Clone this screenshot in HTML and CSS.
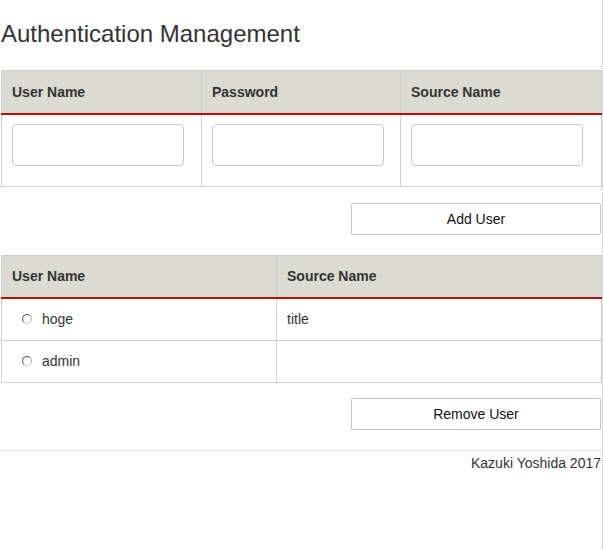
FILE: index.html
```html
<!DOCTYPE html>
<html>
<head>
<meta charset="utf-8">
<title>Authentication Management</title>
<link rel="stylesheet" href="styles.css">
</head>
<body>
<div class="page">
  <h1 class="title">Authentication Management</h1>

  <table class="grid grid-input">
    <thead>
      <tr>
        <th class="c1">User Name</th>
        <th class="c2">Password</th>
        <th class="c3">Source Name</th>
      </tr>
    </thead>
    <tbody>
      <tr>
        <td><input class="field" type="text"></td>
        <td><input class="field" type="password"></td>
        <td><input class="field" type="text"></td>
      </tr>
    </tbody>
  </table>

  <div class="actions">
    <button class="btn" type="button">Add User</button>
  </div>

  <table class="grid grid-list">
    <thead>
      <tr>
        <th class="u">User Name</th>
        <th>Source Name</th>
      </tr>
    </thead>
    <tbody>
      <tr>
        <td><label class="pick"><span class="radio"></span>hoge</label></td>
        <td>title</td>
      </tr>
      <tr>
        <td><label class="pick"><span class="radio"></span>admin</label></td>
        <td></td>
      </tr>
    </tbody>
  </table>

  <div class="actions actions-remove">
    <button class="btn" type="button">Remove User</button>
  </div>

  <footer class="footer">Kazuki Yoshida 2017</footer>
</div>
<div class="edge"></div>
</body>
</html>
```
FILE: styles.css
```css
html, body {
  margin: 0;
  padding: 0;
  background: #fff;
}
body {
  font-family: "Liberation Sans", Arial, sans-serif;
  font-size: 14px;
  color: #333;
}
.page {
  width: 601px;
  padding-left: 1px;
  padding-top: 20px;
}
.title {
  margin: 0 0 22px 0;
  font-size: 24px;
  font-weight: normal;
  line-height: 28px;
  color: #333;
}
.grid {
  width: 601px;
  border-collapse: collapse;
  table-layout: fixed;
}
.grid th {
  background: #dcdbd1;
  border: 1px solid #cfcfcf;
  border-bottom: 2px solid #b90d0d;
  text-align: left;
  font-weight: bold;
  font-size: 14px;
  color: #333;
  height: 43px;
  padding: 0 10px;
  box-sizing: border-box;
}
.grid td {
  border: 1px solid #cfcfcf;
  padding: 0 10px;
  vertical-align: middle;
}
.grid-input th.c1 { width: 200px; }
.grid-input th.c2 { width: 199px; }
.grid-input td {
  padding: 9px 10px 20px 10px;
}
.field {
  display: block;
  width: 172px;
  height: 42px;
  box-sizing: border-box;
  border: 1px solid #c8c8c8;
  border-radius: 4px;
  background: #fff;
  margin: 0;
}
.actions {
  display: flex;
  justify-content: flex-end;
  padding: 16px 1px 20px 0;
}
.actions-remove {
  padding-top: 15px;
  padding-bottom: 20px;
}
.btn {
  width: 250px;
  height: 32px;
  border: 1px solid #c6c6c6;
  border-radius: 2px;
  background: #fff;
  box-shadow: 0 0 1px rgba(0,0,0,0.15);
  font-family: "Liberation Sans", Arial, sans-serif;
  font-size: 14px;
  color: #111;
  padding: 0;
}
.grid-list th.u { width: 275px; }
.grid-list td {
  height: 42px;
  box-sizing: border-box;
}
.pick {
  display: flex;
  align-items: center;
  gap: 10px;
  padding-left: 10px;
}
.radio {
  width: 10px;
  height: 10px;
  border-radius: 50%;
  border: 1px solid #5a5a5a;
  background: radial-gradient(circle at 60% 60%, #fff 30%, #e3e3e3 100%);
  box-sizing: border-box;
  border-right-color: #b0b0b0;
  border-bottom-color: #c8c8c8;
}
.footer {
  border-top: 1px solid #e6e6e6;
  text-align: right;
  padding-top: 4px;
  padding-right: 1px;
  font-size: 14px;
  line-height: 16px;
  color: #333;
  margin-left: -1px;
}
.edge {
  position: fixed;
  top: 0;
  right: 0;
  width: 1px;
  height: 100%;
  background: repeating-linear-gradient(to bottom, #c8c8c8 0 1px, #f0f0f0 1px 2px);
}
```
